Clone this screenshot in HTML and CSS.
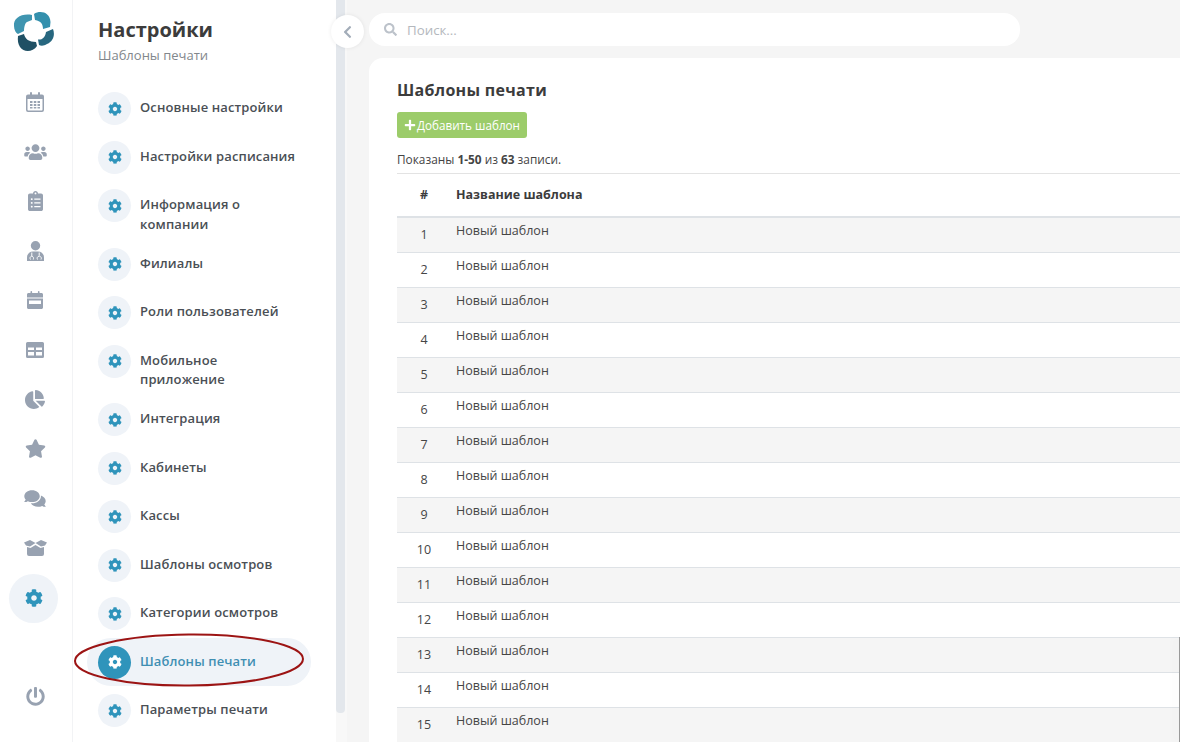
FILE: index.html
```html
<!DOCTYPE html>
<html>
<head>
	<title>Шаблоны печати</title>
	<meta charset="utf-8">
	<link rel="stylesheet" href="styles.css">
</head>
<body>
	<svg class="defs" width="0" height="0">
		<symbol id="cog" viewBox="0 0 512 512"><path d="M487.4 315.7l-42.6-24.6c4.3-23.2 4.3-47 0-70.2l42.6-24.6c4.9-2.8 7.1-8.6 5.5-14-11.1-35.6-30-67.8-54.7-94.6-3.8-4.1-10-5.1-14.8-2.3L380.8 110c-17.9-15.4-38.5-27.3-60.8-35.1V25.8c0-5.6-3.9-10.5-9.4-11.7-36.7-8.2-74.3-7.8-109.2 0-5.5 1.2-9.4 6.1-9.4 11.7V75c-22.2 7.9-42.8 19.8-60.8 35.1L88.7 85.5c-4.9-2.8-11-1.9-14.8 2.3-24.7 26.7-43.6 58.9-54.7 94.6-1.7 5.4.6 11.2 5.5 14L67.3 221c-4.3 23.2-4.3 47 0 70.2l-42.6 24.6c-4.9 2.8-7.1 8.6-5.5 14 11.1 35.6 30 67.8 54.7 94.6 3.8 4.1 10 5.1 14.8 2.3l42.6-24.6c17.9 15.4 38.5 27.3 60.8 35.1v49.2c0 5.6 3.9 10.5 9.4 11.7 36.7 8.2 74.3 7.8 109.2 0 5.5-1.2 9.4-6.1 9.4-11.7v-49.2c22.2-7.9 42.8-19.8 60.8-35.1l42.6 24.6c4.9 2.8 11 1.9 14.8-2.3 24.7-26.7 43.6-58.9 54.7-94.6 1.5-5.5-.7-11.3-5.6-14.1zM256 336c-44.1 0-80-35.9-80-80s35.9-80 80-80 80 35.9 80 80-35.9 80-80 80z"/></symbol>
	</svg>

	<div class="app">
		<nav class="rail">
			<svg class="logo" viewBox="13 12 41 41" width="41" height="41">
				<path fill="#3f95b0" d="M32 15C22 13 13 18 14 26C14 30 16 33 18 34L24 31C24 27 25 23 27 22L32 20Z"/>
				<path fill="#3490ad" d="M34 14C40 10 50 12 50.500 22L50 27L43 29C43 24 41 21 35 20Z"/>
				<path fill="#27677f" d="M53 29C55 34 54 41 47 44C44 46 41 46 39 45L38 39.500C42 40 45 38 46 32Z"/>
				<path fill="#1f5064" d="M18 36L24 34C25 39 29 42 36 42L37 46C33 52 24 53 20 47C18 44 17.500 40 18 36Z"/>
			</svg>
			<div class="rail-icons">
				<a class="rail-item"><svg width="18" height="20" viewBox="0 0 18 20"><path fill="#98a2b1" d="M2 2.500h2V1a1 1 0 0 1 2 0v1.500h6V1a1 1 0 0 1 2 0v1.500h2a2 2 0 0 1 2 2V18a2 2 0 0 1-2 2H2a2 2 0 0 1-2-2V4.500a2 2 0 0 1 2-2zM1.500 7v10.500c0 .6.4 1 1 1h13c.6 0 1-.4 1-1V7z"/><path fill="#98a2b1" d="M4 9h2.500v2H4zM7.800 9h2.500v2H7.800zM11.500 9H14v2h-2.500zM4 12h2.500v2H4zM7.800 12h2.500v2H7.800zM11.500 12H14v2h-2.500zM4 15h2.500v1.500H4zM7.800 15h2.500v1.500H7.800zM11.500 15H14v1.500h-2.500z"/></svg></a>
				<a class="rail-item"><svg width="23" height="18" viewBox="0 0 640 512"><path fill="#98a2b1" d="M96 224c35.300 0 64-28.700 64-64s-28.700-64-64-64-64 28.700-64 64 28.700 64 64 64zm448 0c35.300 0 64-28.700 64-64s-28.700-64-64-64-64 28.700-64 64 28.700 64 64 64zm32 32h-64c-17.600 0-33.500 7.100-45.100 18.600 40.300 22.100 68.900 62 75.100 109.400h66c17.700 0 32-14.300 32-32v-32c0-35.300-28.700-64-64-64zm-256 0c61.900 0 112-50.100 112-112S381.900 32 320 32 208 82.100 208 144s50.100 112 112 112zm76.800 32h-8.300c-20.800 10-43.900 16-68.500 16s-47.600-6-68.500-16h-8.300C179.600 288 128 339.600 128 403.200V432c0 26.500 21.500 48 48 48h288c26.500 0 48-21.500 48-48v-28.800c0-63.600-51.600-115.200-115.200-115.200zm-223.700-13.400C161.500 263.100 145.600 256 128 256H64c-35.300 0-64 28.700-64 64v32c0 17.700 14.300 32 32 32h65.900c6.300-47.400 34.900-87.300 75.200-109.400z"/></svg></a>
				<a class="rail-item"><svg width="15" height="20" viewBox="0 0 384 512"><path fill="#98a2b1" d="M336 64h-80c0-35.300-28.700-64-64-64s-64 28.700-64 64H48C21.500 64 0 85.500 0 112v352c0 26.500 21.500 48 48 48h288c26.500 0 48-21.500 48-48V112c0-26.500-21.500-48-48-48zM96 424c-13.300 0-24-10.700-24-24s10.700-24 24-24 24 10.700 24 24-10.700 24-24 24zm0-96c-13.300 0-24-10.700-24-24s10.700-24 24-24 24 10.700 24 24-10.700 24-24 24zm0-96c-13.300 0-24-10.700-24-24s10.700-24 24-24 24 10.700 24 24-10.700 24-24 24zm96-192c13.300 0 24 10.700 24 24s-10.700 24-24 24-24-10.700-24-24 10.700-24 24-24zm128 368c0 4.400-3.600 8-8 8H168c-4.400 0-8-3.600-8-8v-16c0-4.400 3.600-8 8-8h144c4.400 0 8 3.600 8 8v16zm0-96c0 4.400-3.600 8-8 8H168c-4.400 0-8-3.600-8-8v-16c0-4.400 3.600-8 8-8h144c4.400 0 8 3.600 8 8v16zm0-96c0 4.400-3.600 8-8 8H168c-4.400 0-8-3.600-8-8v-16c0-4.400 3.600-8 8-8h144c4.400 0 8 3.600 8 8v16z"/></svg></a>
				<a class="rail-item"><svg width="17" height="20" viewBox="0 0 17 20"><circle cx="8.500" cy="4.700" r="4.700" fill="#98a2b1"/><path fill="#98a2b1" d="M0 20v-3.500C0 13 2.500 10.500 6 10.500h5c3.500 0 6 2.500 6 6V20z"/><path fill="none" stroke="#fff" stroke-width="1" d="M4.800 11.500v3.500M12.200 11.500v3M3.500 18.500c-1-1.500-.4-3 1.300-3.300M6.300 18.500c.6-1.500 0-3-1.500-3.300M10.500 18.500c-.8-1.500-.2-3 1.700-3.500 1.900.5 2.600 2 1.800 3.500"/></svg></a>
				<a class="rail-item"><svg width="16" height="18" viewBox="0 0 16 18"><path fill="#98a2b1" d="M0 6.500V3.500C0 2.600.7 2 1.500 2H3.500V.8a.8.8 0 0 1 1.600 0V2h5.800V.8a.8.8 0 0 1 1.600 0V2h2c.8 0 1.500.6 1.500 1.500v3z"/><path fill="#98a2b1" fill-rule="evenodd" d="M0 7.500h16v9c0 .9-.7 1.500-1.500 1.500h-13C.7 18 0 17.400 0 16.500zM2 9.500v3.500h12V9.500z"/></svg></a>
				<a class="rail-item"><svg width="18" height="16" viewBox="0 0 18 16"><path fill="#98a2b1" fill-rule="evenodd" d="M1.500 0h15A1.500 1.500 0 0 1 18 1.500v13a1.500 1.500 0 0 1-1.500 1.500h-15A1.500 1.500 0 0 1 0 14.500v-13A1.500 1.500 0 0 1 1.500 0zM2 5.500V8h6V5.500zM10 5.500V8h6V5.500zM2 10v3.500h6V10zM10 10v3.500h6V10z"/></svg></a>
				<a class="rail-item"><svg width="20" height="19" viewBox="0 0 544 512"><path fill="#98a2b1" d="M527.790 288H290.500l158.030 158.030c6.040 6.040 15.980 6.530 22.190.68 38.700-36.460 65.320-85.610 73.130-140.860 1.340-9.460-6.510-17.850-16.060-17.850zm-15.830-64.800C503.720 103.740 408.260 8.280 288.800.04 279.680-.59 272 7.100 272 16.240V240h223.770c9.140 0 16.820-7.680 16.190-16.800zM224 288V50.710c0-9.550-8.390-17.400-17.840-16.060C86.990 51.490-4.100 155.600.14 280.370 4.500 408.510 114.830 513.590 243.030 511.980c50.400-.63 96.970-16.870 135.260-44.030 7.900-5.600 8.420-17.230 1.570-24.080L224 288z"/></svg></a>
				<a class="rail-item"><svg width="21" height="19" viewBox="0 0 576 512"><path fill="#98a2b1" d="M259.300 17.800L194 150.200 47.900 171.500c-26.200 3.800-36.700 36.100-17.700 54.600l105.700 103-25 145.500c-4.500 26.300 23.200 46 46.400 33.700L288 439.600l130.700 68.700c23.200 12.200 50.900-7.400 46.400-33.700l-25-145.500 105.700-103c19-18.500 8.500-50.800-17.700-54.600L382 150.200 316.700 17.800c-11.700-23.600-45.600-23.900-57.400 0z"/></svg></a>
				<a class="rail-item"><svg width="22" height="19" viewBox="0 0 576 512"><path fill="#98a2b1" d="M416 192c0-88.400-93.100-160-208-160S0 103.600 0 192c0 34.300 14.100 65.900 38 92-13.400 30.200-35.500 54.200-35.800 54.500-2.200 2.300-2.800 5.700-1.500 8.700S4.800 352 8 352c36.600 0 66.900-12.300 88.700-25 32.200 15.700 70.300 25 111.300 25 114.900 0 208-71.600 208-160zm122 220c23.900-26 38-57.700 38-92 0-66.900-53.500-124.200-129.300-148.100.9 6.600 1.300 13.300 1.300 20.100 0 105.900-107.700 192-240 192-10.800 0-21.300-.8-31.700-1.900C207.800 439.600 281.800 480 368 480c41 0 79.100-9.200 111.300-25 21.800 12.700 52.100 25 88.700 25 3.200 0 6.100-1.900 7.300-4.800 1.300-2.900.7-6.300-1.500-8.700-.3-.3-22.400-24.200-35.800-54.500z"/></svg></a>
				<a class="rail-item"><svg width="23" height="16" viewBox="0 0 23 16"><path fill="#98a2b1" d="M0 2.500L6 0l5.500 3L6 6.500 2 5.500zM23 2.500L17 0l-5.500 3L17 6.500l4 -1zM3 7l3.500 1L11.500 5v11H5a2 2 0 0 1-2-2zM20 7l-3.500 1-5-3v11H18a2 2 0 0 0 2-2z"/></svg></a>
				<a class="rail-item current"><svg width="18" height="18"><use href="#cog"/></svg></a>
			</div>
			<a class="rail-item power"><svg width="19" height="19" viewBox="0 0 512 512"><path fill="#98a2b1" d="M400 54.100c63 45 104 118.600 104 201.900 0 136.800-110.800 247.700-247.500 248C120 504.300 8.200 393 8 256.400 7.900 173.100 48.900 99.300 111.800 54.200c11.700-8.300 28-4.800 35 7.700L162.600 90c5.900 10.500 3.100 23.800-6.600 31-41.500 30.800-68 79.600-68 134.900-.1 92.300 74.500 168.100 168 168.100 91.600 0 168.600-74.200 168-169.100-.3-51.800-24.700-101.800-68.100-134-9.700-7.200-12.400-20.500-6.500-30.900l15.800-28.100c7-12.400 23.200-16.100 34.800-7.800zM296 264V24c0-13.300-10.700-24-24-24h-32c-13.300 0-24 10.700-24 24v240c0 13.300 10.700 24 24 24h32c13.300 0 24-10.700 24-24z"/></svg></a>
		</nav>

		<aside class="settings">
			<h1>Настройки</h1>
			<p class="settings-sub">Шаблоны печати</p>
			<ul class="menu">
				<li><span class="menu-icon"><svg width="14" height="14"><use href="#cog"/></svg></span><span class="menu-text">Основные настройки</span></li>
				<li><span class="menu-icon"><svg width="14" height="14"><use href="#cog"/></svg></span><span class="menu-text">Настройки расписания</span></li>
				<li><span class="menu-icon"><svg width="14" height="14"><use href="#cog"/></svg></span><span class="menu-text">Информация о компании</span></li>
				<li><span class="menu-icon"><svg width="14" height="14"><use href="#cog"/></svg></span><span class="menu-text">Филиалы</span></li>
				<li><span class="menu-icon"><svg width="14" height="14"><use href="#cog"/></svg></span><span class="menu-text">Роли пользователей</span></li>
				<li><span class="menu-icon"><svg width="14" height="14"><use href="#cog"/></svg></span><span class="menu-text">Мобильное приложение</span></li>
				<li><span class="menu-icon"><svg width="14" height="14"><use href="#cog"/></svg></span><span class="menu-text">Интеграция</span></li>
				<li><span class="menu-icon"><svg width="14" height="14"><use href="#cog"/></svg></span><span class="menu-text">Кабинеты</span></li>
				<li><span class="menu-icon"><svg width="14" height="14"><use href="#cog"/></svg></span><span class="menu-text">Кассы</span></li>
				<li><span class="menu-icon"><svg width="14" height="14"><use href="#cog"/></svg></span><span class="menu-text">Шаблоны осмотров</span></li>
				<li><span class="menu-icon"><svg width="14" height="14"><use href="#cog"/></svg></span><span class="menu-text">Категории осмотров</span></li>
				<li class="active"><span class="menu-icon"><svg width="14" height="14"><use href="#cog"/></svg></span><span class="menu-text">Шаблоны печати</span></li>
				<li><span class="menu-icon"><svg width="14" height="14"><use href="#cog"/></svg></span><span class="menu-text">Параметры печати</span></li>
			</ul>
		</aside>
		<div class="scroll-track"><div class="scroll-thumb"></div></div>

		<main class="main">
			<div class="search">
				<svg width="13" height="13" viewBox="0 0 512 512"><path fill="#bcc2ca" d="M505 442.700L405.300 343c-4.500-4.500-10.600-7-17-7H372c27.600-35.300 44-79.700 44-128C416 93.100 322.900 0 208 0S0 93.100 0 208s93.100 208 208 208c48.300 0 92.700-16.400 128-44v16.300c0 6.400 2.500 12.500 7 17l99.700 99.700c9.400 9.400 24.600 9.400 33.900 0l28.300-28.300c9.400-9.400 9.400-24.600.1-34zM208 336c-70.700 0-128-57.200-128-128 0-70.700 57.200-128 128-128 70.700 0 128 57.200 128 128 0 70.700-57.200 128-128 128z"/></svg>
				<span>Поиск...</span>
			</div>
			<section class="card">
				<h2>Шаблоны печати</h2>
				<a class="btn-add"><svg width="12" height="12" viewBox="0 0 448 512"><path fill="#fff" d="M416 208H272V64c0-17.670-14.330-32-32-32h-32c-17.670 0-32 14.330-32 32v144H32c-17.670 0-32 14.330-32 32v32c0 17.670 14.330 32 32 32h144v144c0 17.670 14.330 32 32 32h32c17.670 0 32-14.330 32-32V304h144c17.670 0 32-14.330 32-32v-32c0-17.670-14.330-32-32-32z"/></svg>Добавить шаблон</a>
				<div class="summary">Показаны <b>1-50</b> из <b>63</b> записи.</div>
				<table class="grid">
					<thead>
						<tr><th class="num">#</th><th>Название шаблона</th></tr>
					</thead>
					<tbody>
						<tr><td class="num">1</td><td>Новый шаблон</td></tr>
						<tr><td class="num">2</td><td>Новый шаблон</td></tr>
						<tr><td class="num">3</td><td>Новый шаблон</td></tr>
						<tr><td class="num">4</td><td>Новый шаблон</td></tr>
						<tr><td class="num">5</td><td>Новый шаблон</td></tr>
						<tr><td class="num">6</td><td>Новый шаблон</td></tr>
						<tr><td class="num">7</td><td>Новый шаблон</td></tr>
						<tr><td class="num">8</td><td>Новый шаблон</td></tr>
						<tr><td class="num">9</td><td>Новый шаблон</td></tr>
						<tr><td class="num">10</td><td>Новый шаблон</td></tr>
						<tr><td class="num">11</td><td>Новый шаблон</td></tr>
						<tr><td class="num">12</td><td>Новый шаблон</td></tr>
						<tr><td class="num">13</td><td>Новый шаблон</td></tr>
						<tr><td class="num">14</td><td>Новый шаблон</td></tr>
						<tr><td class="num">15</td><td>Новый шаблон</td></tr>
					</tbody>
				</table>
			</section>
		</main>
	</div>

	<button class="collapse"><svg width="9" height="14" viewBox="0 0 320 512"><path fill="#a3adb9" d="M34.520 239.030L228.870 44.690c9.370-9.370 24.570-9.370 33.940 0l22.670 22.670c9.360 9.360 9.370 24.520.04 33.900L131.490 256l154.020 154.750c9.340 9.380 9.320 24.540-.04 33.900l-22.670 22.670c-9.370 9.370-24.570 9.370-33.940 0L34.520 272.970c-9.370-9.370-9.370-24.570 0-33.940z"/></svg></button>
	<div class="edge-shadow"></div>
	<svg class="annotation" width="240" height="60" viewBox="0 0 240 60"><ellipse cx="120" cy="29" rx="114" ry="25.500" fill="none" stroke="#9c1414" stroke-width="2"/></svg>
</body>
</html>
```

FILE: styles.css
```css
* {
	box-sizing: border-box;
}
html, body {
	height: 100%;
}
body {
	margin: 0;
	overflow: hidden;
	background: #fff;
	color: #3c4043;
	font-family: "Open Sans", sans-serif;
	font-size: 12px;
}
.defs {
	position: absolute;
}
.app {
	display: flex;
	height: 742px;
}

/* icon rail */
.rail {
	width: 73px;
	flex: none;
	display: flex;
	flex-direction: column;
	align-items: flex-start;
	padding: 12px 0 0 9px;
	border-right: 1px solid #f2f3f5;
}
.logo {
	display: block;
	margin-left: 4px;
}
.rail-icons {
	display: flex;
	flex-direction: column;
	margin-top: 24.500px;
}
.rail-item {
	width: 49px;
	height: 49.500px;
	display: flex;
	align-items: center;
	justify-content: center;
	padding-left: 3px;
}
.rail-item.current {
	border-radius: 50%;
	background: #eff3f8;
	padding-left: 0;
	margin-top: 1px;
	fill: #2f94bb;
}
.rail-item.power {
	margin-top: 49px;
}

/* settings list */
.settings {
	width: 263px;
	flex: none;
	padding: 15.500px 25px 0 14px;
}
.settings h1 {
	margin: 0 0 0 11px;
	font-size: 20px;
	line-height: 27px;
	font-weight: 700;
	color: #3c3c3c;
}
.settings-sub {
	margin: 3.500px 0 0 11px;
	font-size: 13px;
	line-height: 18px;
	color: #82878c;
}
.menu {
	list-style: none;
	margin: 20px 0 0;
	padding: 0;
}
.menu li {
	display: flex;
	padding: 8px 11px 4.500px;
	border-radius: 24px;
	fill: #2f94bb;
}
.menu-icon {
	width: 33px;
	height: 33px;
	flex: none;
	margin: 0 9px 3px 0;
	display: flex;
	align-items: center;
	justify-content: center;
	border-radius: 50%;
	background: #eff3f8;
}
.menu-text {
	padding: 6px 0 1px;
	font-size: 13px;
	line-height: 19.500px;
	font-weight: 600;
	letter-spacing: 0.12px;
	color: #4a4f55;
}
.menu li.active {
	background: #eff3f8;
	fill: #fff;
}
.menu li.active .menu-icon {
	background: #2f94bb;
}
.menu li.active .menu-text {
	color: #3f8fb3;
}

.scroll-track {
	width: 11px;
	flex: none;
	background: #f8f8f8;
}
.scroll-thumb {
	width: 9px;
	height: 713px;
	border-radius: 0 0 4px 4px;
	background: #e3e7ec;
}

/* main column */
.main {
	flex: 1;
	min-width: 0;
	overflow: hidden;
	background: #f5f5f5;
	padding: 13px 0 0 22px;
}
.search {
	width: 651px;
	height: 33px;
	display: flex;
	align-items: center;
	gap: 10px;
	padding-left: 15px;
	border-radius: 16px;
	background: #fff;
	color: #b4b8bd;
	font-size: 13.300px;
}
.card {
	margin-top: 12px;
	margin-right: -20px;
	height: 700px;
	padding: 21px 0 0 28px;
	border-radius: 14px 0 0 0;
	background: #fff;
}
.card h2 {
	margin: 0;
	font-size: 16px;
	line-height: 22px;
	font-weight: 700;
	letter-spacing: 0.3px;
	color: #3c3c3c;
}
.btn-add {
	width: 130px;
	height: 26px;
	margin-top: 11px;
	display: flex;
	align-items: center;
	gap: 1px;
	padding-left: 7px;
	border-radius: 3px;
	background: #9ccc6a;
	color: #fff;
	font-size: 11.700px;
}
.summary {
	margin-top: 13px;
	font-size: 11.850px;
	line-height: 16px;
	color: #444;
}
.grid {
	width: 100%;
	margin-top: 6px;
	border-collapse: collapse;
	border-top: 1px solid #e3e3e3;
}
.grid th {
	height: 43px;
	padding: 0 5px;
	border-bottom: 2px solid #dee2e6;
	font-size: 12.500px;
	font-weight: 700;
	text-align: left;
	color: #3c3c3c;
}
.grid td {
	height: 35px;
	padding: 4px 5px 12px;
	border-bottom: 1px solid #dee2e6;
	font-size: 12.500px;
	line-height: 18px;
	color: #454545;
}
.grid .num {
	width: 54px;
	padding-right: 0;
	padding-left: 0;
	text-align: center;
}
.grid td.num {
	padding-top: 8px;
	padding-bottom: 8px;
}
.grid tbody tr:nth-child(odd) {
	background: #f5f5f5;
}

/* things lying over the page */
.collapse {
	position: absolute;
	left: 331px;
	top: 15px;
	width: 33px;
	height: 33px;
	padding: 0;
	display: flex;
	align-items: center;
	justify-content: center;
	border: 0;
	border-radius: 50%;
	background: #fff;
	box-shadow: 0 0 4px rgba(0, 0, 0, 0.08);
}
.edge-shadow {
	position: absolute;
	right: 0;
	top: 637px;
	bottom: 0;
	width: 1px;
	background: #999;
	box-shadow: -3px 0 8px rgba(0, 0, 0, 0.12);
}
.annotation {
	position: absolute;
	left: 69px;
	top: 631px;
	transform: rotate(-0.5deg);
}
```
